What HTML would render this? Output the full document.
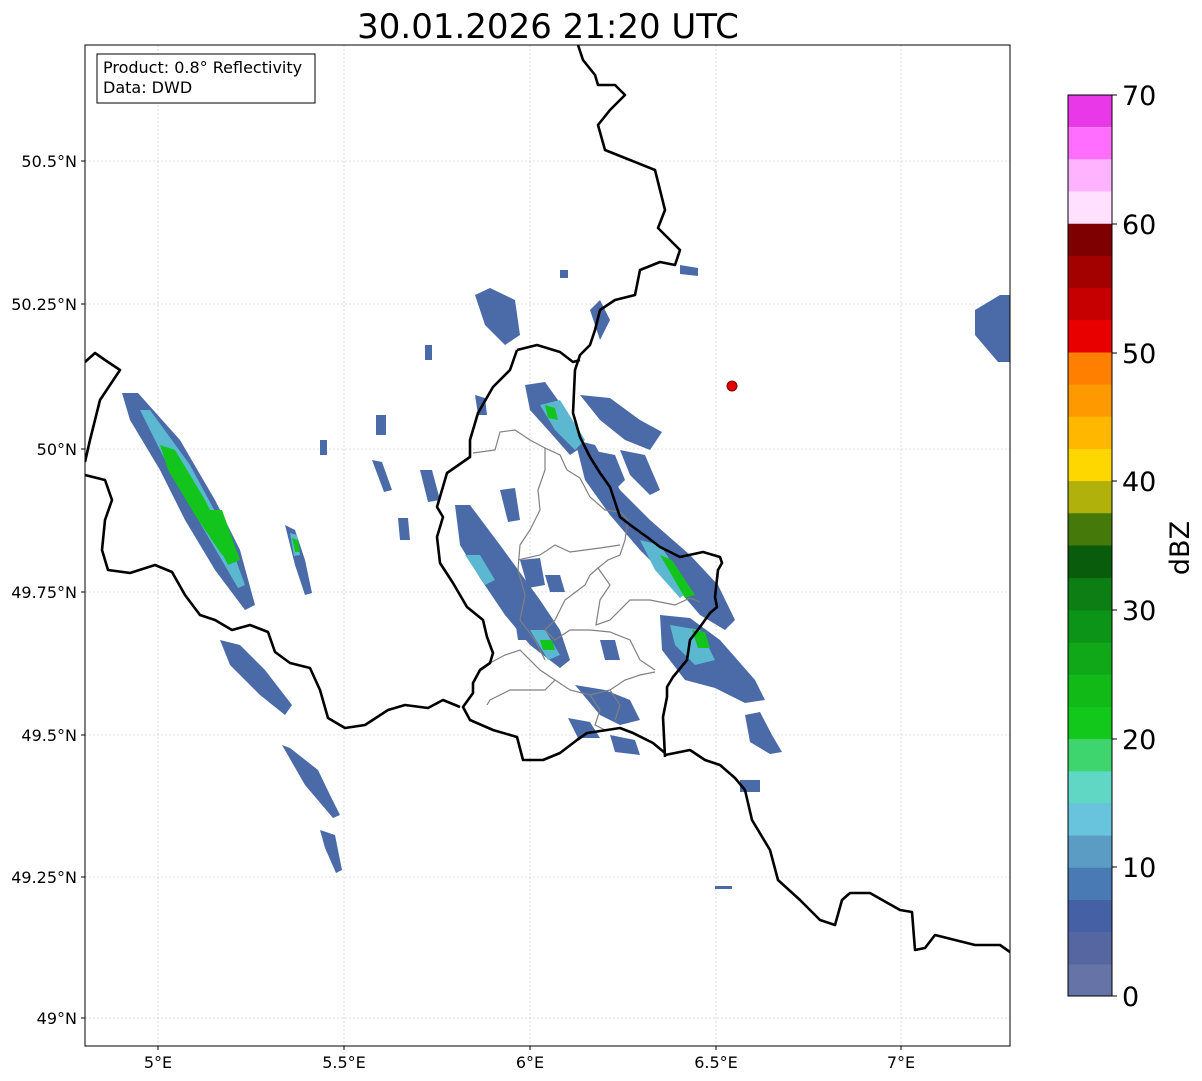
<!DOCTYPE html>
<html><head><meta charset="utf-8"><style>
html,body{margin:0;padding:0;background:#fff;}
svg{display:block;font-family:"DejaVu Sans","Liberation Sans",sans-serif;}
</style></head><body>
<svg width="1202" height="1081" viewBox="0 0 1202 1081" xmlns="http://www.w3.org/2000/svg">
<rect width="1202" height="1081" fill="#fff"/>
<text x="548" y="38" font-size="34" text-anchor="middle" fill="#000">30.01.2026 21:20 UTC</text>
<defs><clipPath id="ax"><rect x="85" y="45" width="925" height="1001"/></clipPath></defs>
<g clip-path="url(#ax)">
<g stroke="#c4c4c4" stroke-width="0.6" stroke-dasharray="2,2">
<line x1="158" y1="45" x2="158" y2="1046"/><line x1="344" y1="45" x2="344" y2="1046"/>
<line x1="530" y1="45" x2="530" y2="1046"/><line x1="716" y1="45" x2="716" y2="1046"/>
<line x1="901" y1="45" x2="901" y2="1046"/>
<line x1="85" y1="161" x2="1010" y2="161"/><line x1="85" y1="304" x2="1010" y2="304"/>
<line x1="85" y1="449" x2="1010" y2="449"/><line x1="85" y1="592" x2="1010" y2="592"/>
<line x1="85" y1="735" x2="1010" y2="735"/><line x1="85" y1="877" x2="1010" y2="877"/>
<line x1="85" y1="1018" x2="1010" y2="1018"/>
</g>
<g fill="#4a6aa8">
<polygon points="122,393 138,393 180,440 215,500 240,550 255,605 245,610 215,570 185,520 160,470 130,420"/>
<polygon points="220,640 240,645 265,670 292,705 285,715 260,695 230,665"/>
<polygon points="285,525 295,530 305,560 312,593 305,595 295,565"/>
<polygon points="282,745 290,748 318,770 330,795 340,815 333,818 305,785"/>
<polygon points="320,830 335,835 342,870 336,873 325,848"/>
<polygon points="475,295 490,288 515,300 520,335 505,345 485,325"/>
<polygon points="590,310 600,300 610,320 600,340"/>
<polygon points="975,310 1000,295 1010,295 1010,362 998,362 975,335"/>
<polygon points="525,385 545,382 565,410 585,445 570,455 548,430 530,410"/>
<polygon points="580,395 610,398 640,420 662,432 650,450 625,440 600,420"/>
<polygon points="590,450 615,455 625,480 615,490 600,475"/>
<polygon points="575,440 595,445 620,490 650,520 690,555 718,585 735,620 725,630 700,615 670,580 640,550 610,515 585,480"/>
<polygon points="660,615 690,618 720,640 755,680 765,700 745,703 715,688 685,680 662,650"/>
<polygon points="620,450 645,455 660,490 650,495 630,475"/>
<polygon points="455,505 470,505 500,545 540,600 560,630 570,660 560,668 530,645 505,615 480,578 460,545"/>
<polygon points="575,685 605,690 630,700 640,720 620,725 600,715"/>
<polygon points="568,718 590,722 600,738 578,738"/>
<polygon points="610,735 635,740 640,755 615,752"/>
<polygon points="745,715 760,712 772,735 782,752 770,754 750,742"/>
<polygon points="372,460 382,462 392,490 384,492"/>
<polygon points="420,470 432,470 440,500 428,502"/>
<polygon points="398,518 408,518 410,540 400,540"/>
<polygon points="500,490 515,488 520,520 508,522"/>
<polygon points="520,560 540,558 545,585 528,588"/>
<polygon points="475,395 485,398 487,415 478,415"/>
<polygon points="425,345 432,345 432,360 425,360"/>
<polygon points="376,415 386,415 386,435 376,435"/>
<polygon points="320,440 327,440 327,455 320,455"/>
<polygon points="740,780 760,780 760,792 740,792"/>
<polygon points="680,265 698,268 698,276 680,274"/>
<polygon points="560,270 568,270 568,278 560,278"/>
<polygon points="715,886 732,886 732,889 715,889"/>
<polygon points="600,640 615,640 620,660 605,660"/>
<polygon points="545,575 560,575 565,592 550,592"/>
<polygon points="515,620 525,618 530,640 518,640"/>
</g>
<g fill="#5cb8d0">
<polygon points="140,410 150,410 190,465 225,530 245,585 238,588 210,540 175,480"/>
<polygon points="540,405 560,400 585,440 575,450 555,430"/>
<polygon points="640,540 660,545 690,590 680,598 655,570"/>
<polygon points="465,555 480,555 495,580 485,585"/>
<polygon points="670,625 700,630 715,660 695,665 675,645"/>
<polygon points="530,630 545,630 560,655 548,660"/>
<polygon points="290,533 297,535 300,555 294,556"/>
</g>
<g fill="#12c41c">
<polygon points="160,445 175,450 205,500 230,550 222,555 195,515 168,470"/>
<polygon points="200,510 222,510 240,560 228,565"/>
<polygon points="660,555 672,560 695,595 685,598"/>
<polygon points="545,405 555,408 558,420 548,418"/>
<polygon points="692,630 705,632 710,648 698,648"/>
<polygon points="540,640 552,640 555,650 543,650"/>
<polygon points="292,538 298,540 300,552 295,552"/>
</g>
<g fill="none" stroke="#808080" stroke-width="1.2">
<polyline points="473,453 495,450 500,432 515,430 530,440 545,448 560,455 567,470 580,478 590,497 605,510 620,512 628,520"/>
<polyline points="545,448 545,470 538,490 540,510 530,530 520,545 518,570 525,595 520,620 535,640 545,660"/>
<polyline points="628,520 625,540 620,555 608,560 598,568 590,575 585,585 565,600 555,620 545,630 555,640 570,630 590,630 610,632 630,640 640,660 655,670"/>
<polyline points="518,560 540,555 555,545 570,552 585,550 600,548 620,545"/>
<polyline points="598,568 610,585 600,600 596,625 610,620 630,600 650,600 675,605 690,598 700,602"/>
<polyline points="490,663 505,655 520,650 530,660 540,670 555,680 545,690 530,690 510,690 490,700 487,705"/>
<polyline points="555,680 570,690 590,695 610,690 625,680 640,675 655,672"/>
<polyline points="590,695 600,710 595,725 605,730"/>
<polyline points="610,690 620,705 615,720"/>
</g>
<g fill="none" stroke="#000" stroke-width="2.6" stroke-linejoin="round">
<polyline points="578,45 583,60 595,75 598,85 615,85 625,95 610,110 598,125 605,150 630,160 655,170 660,190 665,210 658,228 680,250 675,265 660,262 640,270 635,295 615,300 600,310 595,330 590,345 580,355 575,370 573,413 580,437 590,457 600,473 610,487 620,517 633,527 647,537 660,547 680,557 703,552 720,557 722,563 718,570 715,597 717,607 710,613 700,627 690,640 687,660 673,677 667,687 667,697 663,717 665,757"/>
<polyline points="517,350 537,345 560,352 573,362 580,360"/>
<polyline points="517,350 510,370 493,387 478,413 470,440 470,457 447,473 437,507 443,517 437,537 440,563 453,583 467,607 483,620 487,637 493,653 490,663 480,670 473,683 473,693 463,707 470,720 493,730 517,737 523,760 543,760 560,753 577,740 587,733 607,730 620,728 633,733 653,743 665,753"/>
<polyline points="665,755 690,750 705,760 720,765 735,778 745,790 752,820 770,850 778,880 800,900 820,920 835,925 842,900 850,893 870,893 900,910 912,912 915,950 925,948 935,935 955,940 975,945 1000,945 1010,952"/>
<polyline points="85,362 95,353 105,360 120,370 110,385 100,400 95,420 90,440 85,462"/>
<polyline points="85,475 105,480 112,500 105,520 102,550 108,570 130,573 155,565 172,572 185,595 200,615 215,620 232,630 250,625 268,632 275,652 290,663 310,668 320,690 328,718 345,728 365,725 388,710 405,705 428,708 443,700 460,707"/>
</g>
<circle cx="732" cy="386" r="5" fill="#e00000" stroke="#800000" stroke-width="1"/>
</g>
<rect x="85" y="45" width="925" height="1001" fill="none" stroke="#000" stroke-width="1"/>
<g stroke="#000" stroke-width="1">
<line x1="158" y1="1046" x2="158" y2="1050"/><line x1="344" y1="1046" x2="344" y2="1050"/><line x1="530" y1="1046" x2="530" y2="1050"/><line x1="716" y1="1046" x2="716" y2="1050"/><line x1="901" y1="1046" x2="901" y2="1050"/>
<line x1="81" y1="161" x2="85" y2="161"/><line x1="81" y1="304" x2="85" y2="304"/><line x1="81" y1="449" x2="85" y2="449"/><line x1="81" y1="592" x2="85" y2="592"/><line x1="81" y1="735" x2="85" y2="735"/><line x1="81" y1="877" x2="85" y2="877"/><line x1="81" y1="1018" x2="85" y2="1018"/>
</g>
<g font-size="16" fill="#000">
<text x="158" y="1068" text-anchor="middle">5°E</text><text x="344" y="1068" text-anchor="middle">5.5°E</text><text x="530" y="1068" text-anchor="middle">6°E</text><text x="716" y="1068" text-anchor="middle">6.5°E</text><text x="901" y="1068" text-anchor="middle">7°E</text>
<g text-anchor="end"><text x="77" y="167">50.5°N</text><text x="77" y="310">50.25°N</text><text x="77" y="455">50°N</text><text x="77" y="598">49.75°N</text><text x="77" y="741">49.5°N</text><text x="77" y="883">49.25°N</text><text x="77" y="1024">49°N</text></g>
</g>
<rect x="97" y="54" width="218" height="49" fill="#fff" stroke="#000" stroke-width="1"/>
<text x="103" y="73" font-size="16">Product: 0.8° Reflectivity</text>
<text x="103" y="93" font-size="16">Data: DWD</text>
<rect x="1068" y="963.8" width="44" height="32.7" fill="#6673a6"/>
<rect x="1068" y="931.6" width="44" height="32.7" fill="#5566a0"/>
<rect x="1068" y="899.4" width="44" height="32.7" fill="#4560a4"/>
<rect x="1068" y="867.3" width="44" height="32.7" fill="#4a7ab4"/>
<rect x="1068" y="835.1" width="44" height="32.7" fill="#5a9cc4"/>
<rect x="1068" y="802.9" width="44" height="32.7" fill="#68c3dc"/>
<rect x="1068" y="770.7" width="44" height="32.7" fill="#60d6c4"/>
<rect x="1068" y="738.6" width="44" height="32.7" fill="#3ed46e"/>
<rect x="1068" y="706.4" width="44" height="32.7" fill="#12c81a"/>
<rect x="1068" y="674.2" width="44" height="32.7" fill="#12ba18"/>
<rect x="1068" y="642.0" width="44" height="32.7" fill="#10a818"/>
<rect x="1068" y="609.9" width="44" height="32.7" fill="#0c9418"/>
<rect x="1068" y="577.7" width="44" height="32.7" fill="#0c7e14"/>
<rect x="1068" y="545.5" width="44" height="32.7" fill="#0a6e12"/>
<rect x="1068" y="513.3" width="44" height="32.7" fill="#085c0c"/>
<rect x="1068" y="481.2" width="44" height="32.7" fill="#457a0a"/>
<rect x="1068" y="449.0" width="44" height="32.7" fill="#b0b10a"/>
<rect x="1068" y="416.8" width="44" height="32.7" fill="#ffd700"/>
<rect x="1068" y="384.6" width="44" height="32.7" fill="#ffb700"/>
<rect x="1068" y="352.5" width="44" height="32.7" fill="#ff9900"/>
<rect x="1068" y="320.3" width="44" height="32.7" fill="#ff7f00"/>
<rect x="1068" y="288.1" width="44" height="32.7" fill="#e80000"/>
<rect x="1068" y="255.9" width="44" height="32.7" fill="#c60000"/>
<rect x="1068" y="223.8" width="44" height="32.7" fill="#a30000"/>
<rect x="1068" y="95" width="44" height="32.2" fill="#e838e8"/>
<rect x="1068" y="127.2" width="44" height="32.2" fill="#ff6eff"/>
<rect x="1068" y="159.4" width="44" height="32.2" fill="#ffb3ff"/>
<rect x="1068" y="191.6" width="44" height="32.2" fill="#ffe0ff"/>
<rect x="1068" y="223.8" width="44" height="32.2" fill="#7f0000"/>
<rect x="1068" y="255.9" width="44" height="32.2" fill="#a30000"/>
<rect x="1068" y="288.1" width="44" height="32.2" fill="#c60000"/>
<rect x="1068" y="320.3" width="44" height="32.2" fill="#e80000"/>
<rect x="1068" y="352.5" width="44" height="32.2" fill="#ff7f00"/>
<rect x="1068" y="384.6" width="44" height="32.2" fill="#ff9900"/>
<rect x="1068" y="416.8" width="44" height="32.2" fill="#ffb700"/>
<rect x="1068" y="449.0" width="44" height="32.2" fill="#ffd700"/>
<rect x="1068" y="481.2" width="44" height="32.2" fill="#b0b10a"/>
<rect x="1068" y="513.3" width="44" height="32.2" fill="#457a0a"/>
<rect x="1068" y="545.5" width="44" height="32.2" fill="#085c0c"/>
<rect x="1068" y="95" width="44" height="901" fill="none" stroke="#000" stroke-width="1"/>
<g stroke="#000" stroke-width="1">
<line x1="1112" y1="996" x2="1117" y2="996"/><line x1="1112" y1="867" x2="1117" y2="867"/><line x1="1112" y1="739" x2="1117" y2="739"/><line x1="1112" y1="610" x2="1117" y2="610"/><line x1="1112" y1="481" x2="1117" y2="481"/><line x1="1112" y1="353" x2="1117" y2="353"/><line x1="1112" y1="224" x2="1117" y2="224"/><line x1="1112" y1="95" x2="1117" y2="95"/>
</g>
<g font-size="27" fill="#000">
<text x="1122" y="1006">0</text><text x="1122" y="877">10</text><text x="1122" y="749">20</text><text x="1122" y="620">30</text><text x="1122" y="491">40</text><text x="1122" y="363">50</text><text x="1122" y="234">60</text><text x="1122" y="105">70</text>
</g>
<text transform="translate(1189,548) rotate(-90)" font-size="27" text-anchor="middle">dBZ</text>
</svg>
</body></html>
